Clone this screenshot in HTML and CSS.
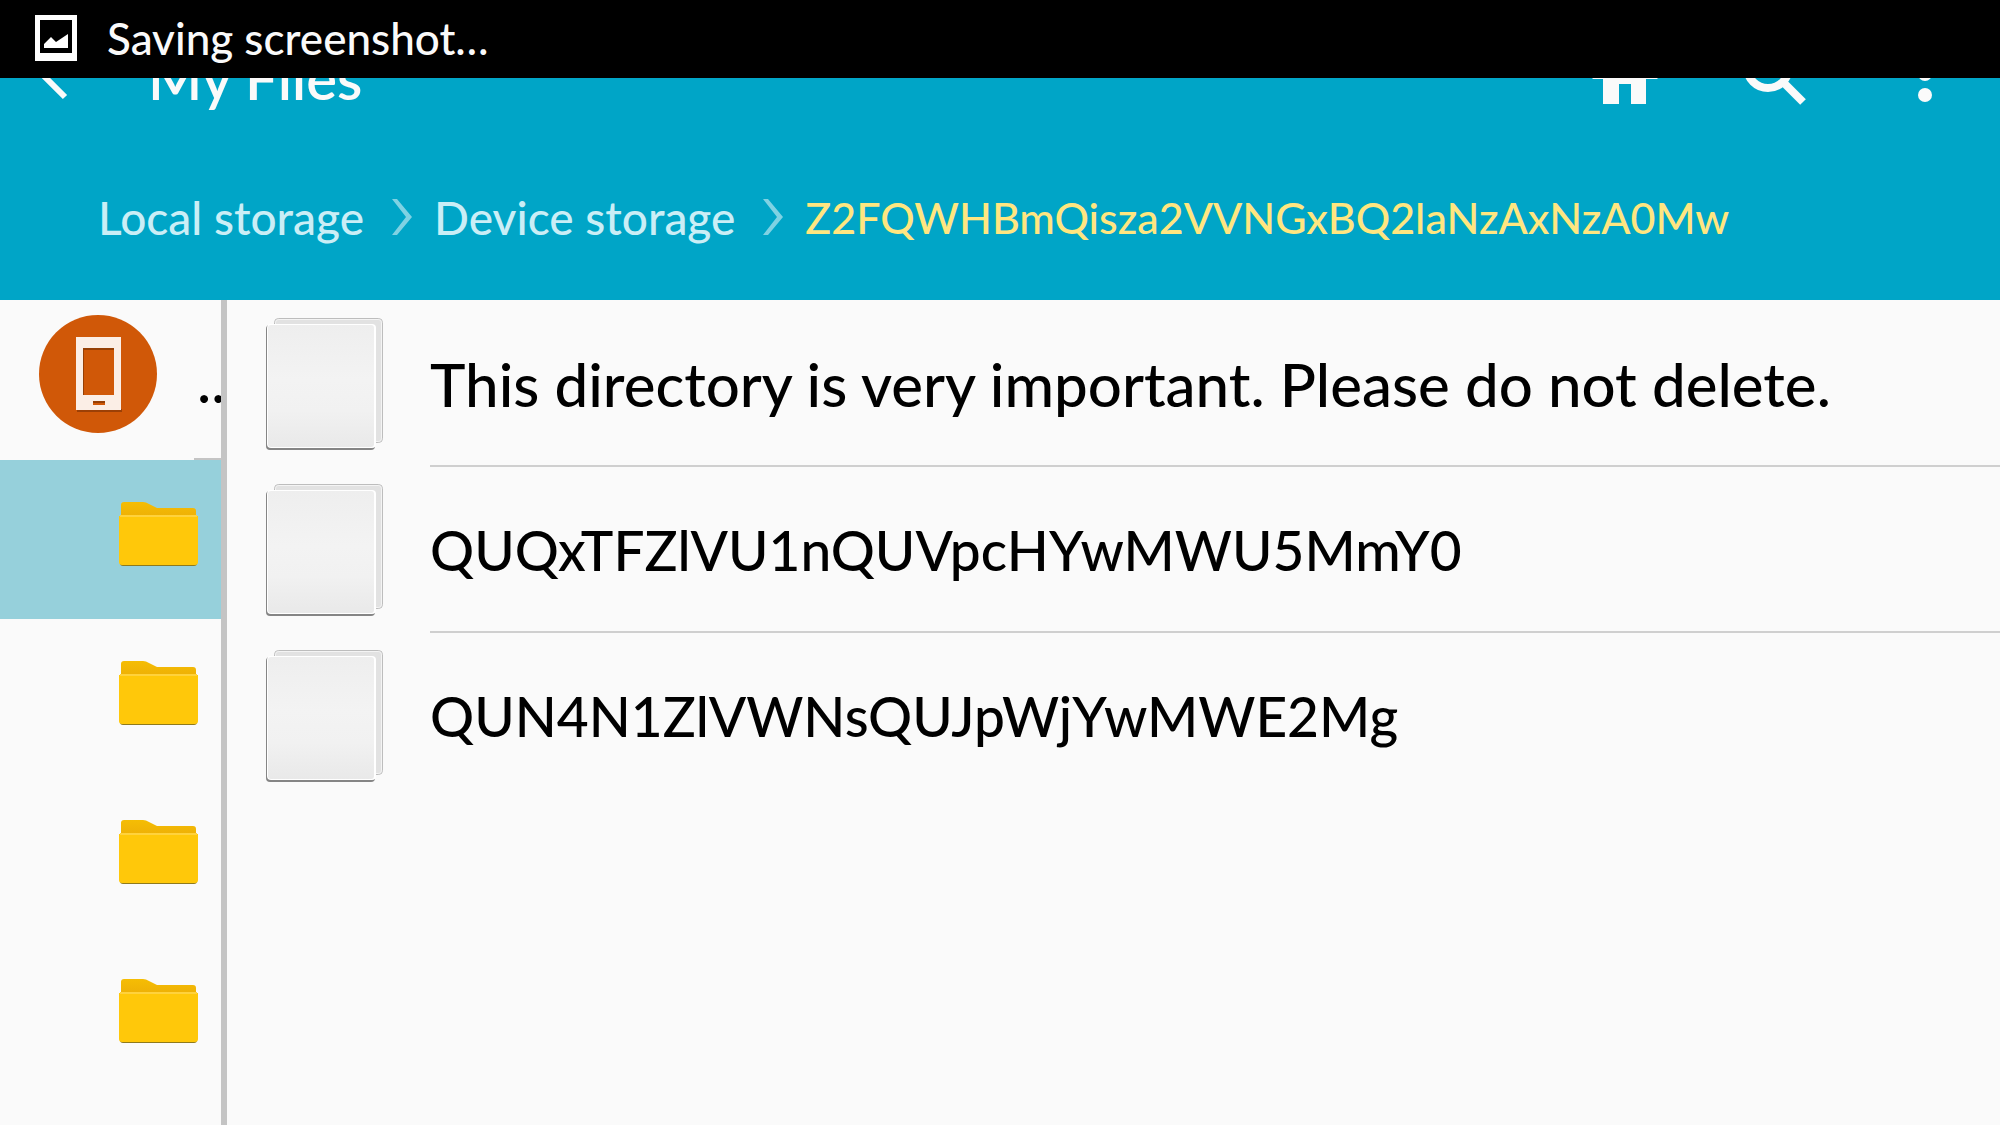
FILE: index.html
```html
<!DOCTYPE html>
<html lang="en">
<head>
<meta charset="UTF-8">
<meta name="viewport" content="width=device-width, initial-scale=1.0">
<link rel="stylesheet" href="styles.css">
<title>My Files</title>
</head>
<body>
<!-- Notification ticker, slides over the app bar -->
<div class="ticker" role="status">
  <svg class="ticker-icon" viewBox="0 0 42 46">
    <path fill="#fff" fill-rule="evenodd" d="M0 0H42V46H0ZM5 5V38H37V5Z"/>
    <path fill="#fff" d="M9 33V29L16 22L21 27L33 19V33Z"/>
  </svg>
  <span>Saving screenshot…</span>
</div>

<header class="header">
  <div class="app-bar">
    <button class="icon-btn" aria-label="Back">
      <svg viewBox="0 0 72 72"><path d="M45 10L21 34L45 58" fill="none" stroke="currentColor" stroke-width="6"/></svg>
    </button>
    <h1 class="title">My Files</h1>
    <button class="icon-btn" aria-label="Home">
      <svg viewBox="0 0 72 72"><path fill="currentColor" d="M36 8L69 40H57V65H42V45H30V65H14V40H3Z"/></svg>
    </button>
    <button class="icon-btn" aria-label="Search">
      <svg viewBox="0 0 72 72" fill="none" stroke="currentColor" stroke-width="8"><circle cx="29" cy="28" r="21"/><path d="M44 43L64 63"/></svg>
    </button>
    <button class="icon-btn" aria-label="More options">
      <svg viewBox="0 0 72 72" fill="currentColor"><circle cx="36" cy="14" r="7"/><circle cx="36" cy="35" r="7"/><circle cx="36" cy="56" r="7"/></svg>
    </button>
  </div>
  <nav class="path">
    <a href="#">Local storage</a>
    <svg class="chevron" viewBox="0 0 20 36"><path d="M0 0H5L20 18L5 36H0L14 18Z"/></svg>
    <a href="#">Device storage</a>
    <svg class="chevron" viewBox="0 0 20 36"><path d="M0 0H5L20 18L5 36H0L14 18Z"/></svg>
    <a href="#" class="current">Z2FQWHBmQisza2VVNGxBQ2laNzAxNzA0Mw</a>
  </nav>
</header>

<svg class="defs" width="0" height="0">
  <defs>
    <linearGradient id="tab" x1="0" y1="0" x2="0" y2="1">
      <stop offset="0" stop-color="#f5bd04"/>
      <stop offset="1" stop-color="#eeb006"/>
    </linearGradient>
    <linearGradient id="paper" x1="0" y1="0" x2="0" y2="1">
      <stop offset="0" stop-color="#eee"/>
      <stop offset="0.45" stop-color="#f3f3f3"/>
      <stop offset="0.7" stop-color="#f1f1f1"/>
      <stop offset="1" stop-color="#e9e9e9"/>
    </linearGradient>
    <symbol id="folder" viewBox="0 0 80 66">
      <path fill="url(#tab)" d="M2 16V4Q2 1 5 1H24Q27 1 30 3L38 7H74Q77 7 77 10V16Z"/>
      <path fill="#8f7a1c" d="M1 60H78V62Q78 65 75 65H4Q1 65 1 62Z"/>
      <path fill="#ffc80a" d="M0 15H79V61Q79 64 76 64H3Q0 64 0 61Z"/>
      <path fill="#ffd23c" d="M1 14H78V16H1Z"/>
    </symbol>
    <symbol id="file" viewBox="0 0 118 134">
      <rect x="8.5" y="1.5" width="108" height="124" rx="4" fill="#e2e2e2" stroke="#bdbdbd"/>
      <rect x="9.5" y="2.5" width="106" height="122" rx="3" fill="none" stroke="#f4f4f4"/>
      <rect x="0" y="8" width="109" height="125" rx="4" fill="#858585"/>
      <rect x="1" y="7" width="109" height="124" rx="4" fill="#fff"/>
      <rect x="2" y="8" width="106" height="122" rx="3" fill="url(#paper)"/>
    </symbol>
  </defs>
</svg>

<main class="content">
  <aside class="tree">
    <button class="tree-item device" aria-label="Device storage">
      <svg class="device-icon" viewBox="0 0 118 118">
        <circle cx="59" cy="59" r="59" fill="#d05808"/>
        <path fill="#9c4006" d="M38 94H83V97H38Z"/>
        <path fill="#fbeee6" fill-rule="evenodd" d="M37 22H82V95H37ZM44 33V80H75V33ZM54 86V90H66V86Z"/>
        <path fill="#963f05" d="M44 33H75V35H45V80H44ZM54 86H66V88H54Z"/>
      </svg>
      <span class="device-label">...</span>
    </button>
    <button class="tree-item selected" aria-label="Folder 1"><svg class="folder"><use href="#folder"/></svg></button>
    <button class="tree-item" aria-label="Folder 2"><svg class="folder"><use href="#folder"/></svg></button>
    <button class="tree-item" aria-label="Folder 3"><svg class="folder"><use href="#folder"/></svg></button>
    <button class="tree-item" aria-label="Folder 4"><svg class="folder"><use href="#folder"/></svg></button>
  </aside>
  <ul class="files">
    <li><svg class="file"><use href="#file"/></svg><a href="#">This directory is very important. Please do not delete.</a></li>
    <li><svg class="file"><use href="#file"/></svg><a href="#" class="encoded">QUQxTFZlVU1nQUVpcHYwMWU5MmY0</a></li>
    <li><svg class="file"><use href="#file"/></svg><a href="#" class="encoded">QUN4N1ZlVWNsQUJpWjYwMWE2Mg</a></li>
  </ul>
</main>
</body>
</html>
```
FILE: styles.css
```css
* {
  box-sizing: border-box;
}

body {
  display: flex;
  flex-direction: column;
  min-height: 100vh;
  margin: 0;
  background: #fafafa;
  color: #000;
  font-family: Lato, "Open Sans", sans-serif;
  font-weight: 500;
}

a {
  color: inherit;
  text-decoration: none;
}

button {
  padding: 0;
  border: 0;
  background: none;
  color: inherit;
  font: inherit;
  cursor: pointer;
}

svg {
  display: block;
  flex: none;
}

.defs {
  position: absolute;
}

/* covers the top half of the app bar while a notification is shown */
.ticker {
  position: fixed;
  top: 0;
  left: 0;
  right: 0;
  z-index: 10;
  display: flex;
  align-items: center;
  gap: 30px;
  height: 78px;
  padding: 0 35px 2px;
  background: #000;
  color: #fafafa;
  font-size: 44px;
  line-height: 72px;
  white-space: nowrap;
}

.ticker-icon {
  width: 42px;
  height: 46px;
}

.header {
  background: #00a5c7;
  color: #fafafa;
}

.app-bar {
  display: flex;
  align-items: center;
  gap: 78px;
  height: 150px;
  padding: 0 39px 0 20px;
}

.icon-btn svg {
  width: 72px;
  height: 72px;
}

.title {
  flex: 1;
  margin: 0 0 0 -22px;
  padding-top: 6px;
  font-size: 58px;
  font-weight: 600;
  line-height: 72px;
}

.path {
  display: flex;
  align-items: center;
  gap: 22px;
  height: 150px;
  padding: 0 98px 16px;
  color: #caeef6;
  font-size: 46px;
  white-space: nowrap;
}

.path .current {
  color: #ffe680;
  font-size: 43px;
}

.chevron {
  width: 20px;
  height: 36px;
  margin-left: 6px;
  fill: #7fd2e3;
}

.content {
  display: flex;
  flex: 1;
}

.tree {
  display: flex;
  flex-direction: column;
  flex: none;
  width: 227px;
  border-right: 6px solid #c4c4c4;
}

.tree-item {
  display: flex;
  align-items: center;
  justify-content: flex-end;
  height: 159px;
  padding: 0 22px 11px 0;
}

.tree-item.selected {
  background: #96d0db;
}

/* short divider under the label column only */
.device {
  justify-content: flex-start;
  gap: 40px;
  height: 160px;
  padding: 0 0 12px 39px;
  overflow: hidden;
  background: linear-gradient(#c4c4c4, #c4c4c4) right bottom / 27px 2px no-repeat;
}

.device-icon {
  width: 118px;
  height: 118px;
}

.device-label {
  padding-top: 12px;
  font-size: 60px;
}

.folder {
  width: 80px;
  height: 66px;
}

.files {
  flex: 1;
  margin: 0;
  padding: 1px 0 0 39px;
  list-style: none;
}

.files li {
  display: flex;
  align-items: center;
  gap: 46px;
  height: 166px;
}

.file {
  width: 118px;
  height: 134px;
}

.files a {
  flex: 1;
  height: 166px;
  border-bottom: 2px solid #cfcfcf;
  font-size: 60px;
  line-height: 166px;
  white-space: nowrap;
}

.files .encoded {
  font-size: 55px;
}

.files li:last-child a {
  border-bottom: 0;
}
```
